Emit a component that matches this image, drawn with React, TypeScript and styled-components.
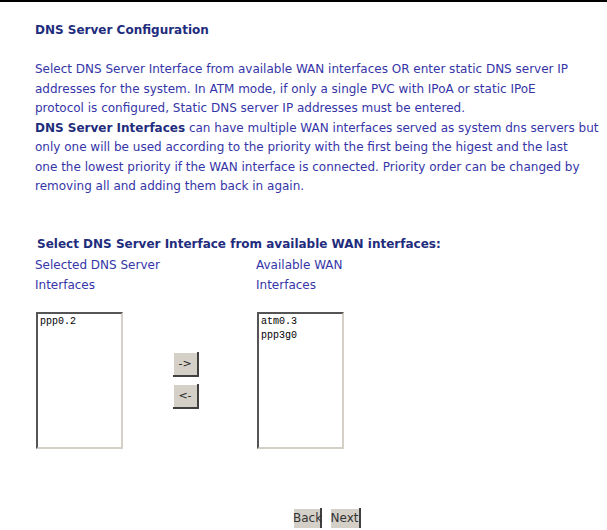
import React from 'react'
import styled, { createGlobalStyle } from 'styled-components'

const GlobalStyle = createGlobalStyle`
  body {
    margin: 0;
    background: #fff;
    font-family: "DejaVu Sans", "Liberation Sans", sans-serif;
  }
`

const Page = styled.div`
  border-top: 2px solid #000;
  width: 607px;
  height: 528px;
  padding: 20px 0 0 35px;
  box-sizing: border-box;
  display: flex;
  flex-direction: column;
`

const Title = styled.div`
  font-weight: bold;
  font-size: 12px;
  color: #1f2d7d;
  line-height: 16px;
`

const Intro = styled.p`
  margin: 22px 0 0;
  font-size: 12px;
  line-height: 19.5px;
  color: #3535a8;
  white-space: nowrap;
`

const Strong = styled.b`
  color: #1f2d7d;
`

const SubTitle = styled.div`
  margin: 39px 0 0 2px;
  font-weight: bold;
  font-size: 12px;
  line-height: 16px;
  color: #1f2d7d;
`

const Columns = styled.div`
  display: grid;
  grid-template-columns: 221px 221px;
  margin-top: 3px;
`

const Label = styled.div`
  font-size: 12px;
  line-height: 20px;
  color: #3535a8;
  width: 140px;
`

const Lists = styled.div`
  display: flex;
  align-items: flex-start;
  margin-top: 17px;
`

const ListBox = styled.div<{ $left: number }>`
  width: 87px;
  height: 137px;
  box-sizing: border-box;
  margin-left: ${(p) => p.$left}px;
  border-top: 2px solid #555;
  border-left: 2px solid #555;
  border-right: 2px solid #d4d0c8;
  border-bottom: 2px solid #d4d0c8;
  background: #fff;
  padding: 1px 2px;
  font-family: "Liberation Mono", monospace;
  font-size: 10px;
  line-height: 14px;
  color: #000;
`

const Arrows = styled.div`
  display: flex;
  flex-direction: column;
  gap: 7px;
  margin-left: 50px;
  margin-top: 40px;
`

const Btn = styled.button<{ $w: number; $h?: number }>`
  background: #d4d0c8;
  border: none;
  border-right: 2px solid #404040;
  border-bottom: 2px solid #404040;
  box-shadow: inset 1px 1px 0 #fff;
  font-family: "DejaVu Sans", sans-serif;
  font-size: 11px;
  color: #222;
  padding: 0;
  width: ${(p) => p.$w}px;
  height: ${(p) => p.$h ?? 25}px;
`

const Footer = styled.div`
  margin-top: auto;
  display: flex;
  gap: 8px;
  padding-left: 258px;
`

const FootBtn = styled(Btn)`
  border-bottom: none;
  font-size: 12px;
  color: #333;
`

export default function App() {
  return (
    <>
      <GlobalStyle />
      <Page>
        <Title>DNS Server Configuration</Title>
        <Intro>
          Select DNS Server Interface from available WAN interfaces OR enter static DNS server IP
          <br />
          addresses for the system. In ATM mode, if only a single PVC with IPoA or static IPoE
          <br />
          protocol is configured, Static DNS server IP addresses must be entered.
          <br />
          <Strong>DNS Server Interfaces</Strong> can have multiple WAN interfaces served as system
          dns servers but
          <br />
          only one will be used according to the priority with the first being the higest and the last
          <br />
          one the lowest priority if the WAN interface is connected. Priority order can be changed by
          <br />
          removing all and adding them back in again.
        </Intro>
        <SubTitle>Select DNS Server Interface from available WAN interfaces:</SubTitle>
        <Columns>
          <Label>Selected DNS Server Interfaces</Label>
          <Label>Available WAN Interfaces</Label>
        </Columns>
        <Lists>
          <ListBox $left={1}>ppp0.2</ListBox>
          <Arrows>
            <Btn $w={26}>-&gt;</Btn>
            <Btn $w={26}>&lt;-</Btn>
          </Arrows>
          <ListBox $left={58}>
            atm0.3
            <br />
            ppp3g0
          </ListBox>
        </Lists>
        <Footer>
          <FootBtn $w={29} $h={20}>Back</FootBtn>
          <FootBtn $w={31} $h={20}>Next</FootBtn>
        </Footer>
      </Page>
    </>
  )
}
